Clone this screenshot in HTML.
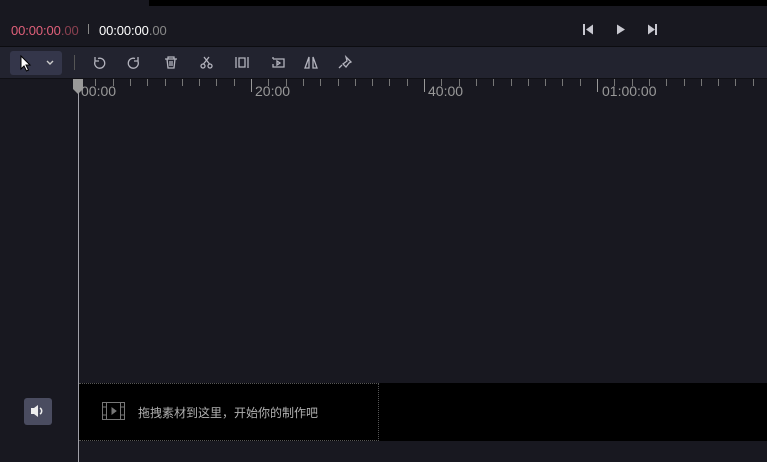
<!DOCTYPE html>
<html><head><meta charset="utf-8"><style>
*{margin:0;padding:0;box-sizing:border-box}
body{width:767px;height:462px;background:#181820;position:relative;overflow:hidden;font-family:"Liberation Sans","Noto Sans CJK SC",sans-serif}
.abs{position:absolute}
svg{position:absolute}
</style></head><body>
<div class="abs" style="left:149px;top:0;width:618px;height:6px;background:#000"></div>
<div class="abs" style="left:11px;top:23px;font-size:13px;color:#e0607a;letter-spacing:-0.1px">00:00:00<span style="color:#8a4050">.00</span></div>
<div class="abs" style="left:88px;top:24px;width:1px;height:10px;background:#888"></div>
<div class="abs" style="left:99px;top:23px;font-size:13px;color:#fff;letter-spacing:-0.1px">00:00:00<span style="color:#888">.00</span></div>
<svg style="left:582px;top:23px" width="80" height="14" viewBox="0 0 80 14">
<rect x="1" y="1" width="2" height="11" fill="#c8c8d0"/><path d="M11 1.5v10L4 6.5z" fill="#c8c8d0"/>
<path d="M35 1.5v10l8-5z" fill="#c8c8d0"/>
<path d="M66 1.5v10l7-5z" fill="#c8c8d0"/><rect x="73" y="1" width="2" height="11" fill="#c8c8d0"/>
</svg>
<div class="abs" style="left:0;top:46px;width:767px;height:1px;background:#0c0c10"></div>
<div class="abs" style="left:0;top:47px;width:767px;height:31px;background:#22232f"></div>
<div class="abs" style="left:10px;top:51px;width:52px;height:24px;background:#34364a;border-radius:3px"></div>
<svg style="left:18px;top:54px" width="40" height="18" viewBox="0 0 40 18">
<path d="M3 2v13l3-3 2.5 5 2-1-2.5-5h4z" fill="#fff" stroke="#000" stroke-width="1"/>
<path d="M29 7l3 3 3-3" fill="none" stroke="#ccc" stroke-width="1.4"/>
</svg>
<div class="abs" style="left:74px;top:55px;width:1px;height:15px;background:#555"></div>
<svg style="left:88px;top:54px" width="280" height="18" viewBox="0 0 280 18" fill="none" stroke="#b4b4be" stroke-width="1.3">
<path d="M10 4.5a5 5 0 1 1-3 3"/><path d="M7 3v4h4"/>
<path d="M47 4.5a5 5 0 1 0 3 3"/><path d="M50 3v4h-4"/>
<path d="M77 5h12M80 5V3h6v2M79 5l1 9h6l1-9M82 7v5M84 7v5"/>
<circle cx="115" cy="12" r="2"/><circle cx="122" cy="12" r="2"/><path d="M115.5 10L121 3M121.5 10L116 3"/>
<path d="M148 3v11M160 3v11M151 4h6v9h-6z"/>
<path d="M185 5h11v8h-11v-3M185 5v-2M189 7l3 2-3 2z"/>
<path d="M221 3l-4 11h4zM225 3l4 11h-4z"/>
<path d="M258 3l5 5-2 1-3 4-3-3 4-3zM254 11l-3 3"/>
</svg>
<div class="abs" style="left:0;top:78px;width:767px;height:1px;background:#101015"></div>
<div id="ticks"></div>
<div class="abs" style="left:81px;top:83px;font-size:14px;color:#999">00:00</div>
<div class="abs" style="left:255px;top:83px;font-size:14px;color:#999">20:00</div>
<div class="abs" style="left:428px;top:83px;font-size:14px;color:#999">40:00</div>
<div class="abs" style="left:602px;top:83px;font-size:14px;color:#999">01:00:00</div>
<div class="abs" style="left:79px;top:383px;width:688px;height:58px;background:#000"></div>
<div class="abs" style="left:79px;top:383px;width:300px;height:58px;border:1px dotted #555;border-left:none"></div>
<svg style="left:102px;top:401px" width="24" height="20" viewBox="0 0 24 20" fill="none" stroke="#777" stroke-width="1">
<rect x="0.5" y="1.5" width="22" height="17"/><path d="M4.5 1.5v17M18.5 1.5v17M0.5 6h4M0.5 14h4M18.5 6h4M18.5 14h4"/><path d="M10 7v6l4-3z" fill="#777"/>
</svg>
<div class="abs" style="left:138px;top:404px;font-size:12px;color:#b0b0b0">拖拽素材到这里，开始你的制作吧</div>
<div class="abs" style="left:24px;top:398px;width:28px;height:27px;background:#4a4c60;border-radius:3px"></div>
<svg style="left:30px;top:404px" width="16" height="14" viewBox="0 0 16 14"><path d="M1 4h3l4-3v12l-4-3H1z" fill="#eee"/><path d="M10 4a3.5 3.5 0 0 1 0 6" stroke="#eee" stroke-width="1.5" fill="none"/></svg>
<div class="abs" style="left:78px;top:79px;width:1px;height:383px;background:#a0a0a8"></div>
<svg style="left:72px;top:79px" width="12" height="16" viewBox="0 0 12 16"><path d="M1 0h10v10l-5 5-5-5z" fill="#999"/></svg>
<script>
var h='';for(var i=0;i<41;i++){var x=78+i*17.3;var maj=i%10==0;h+='<div class="abs" style="left:'+Math.round(x)+'px;top:79px;width:1px;height:'+(maj?13:7)+'px;background:'+(maj?'#999':'#777')+'"></div>';}
document.getElementById('ticks').innerHTML=h;
</script>
</body></html>
